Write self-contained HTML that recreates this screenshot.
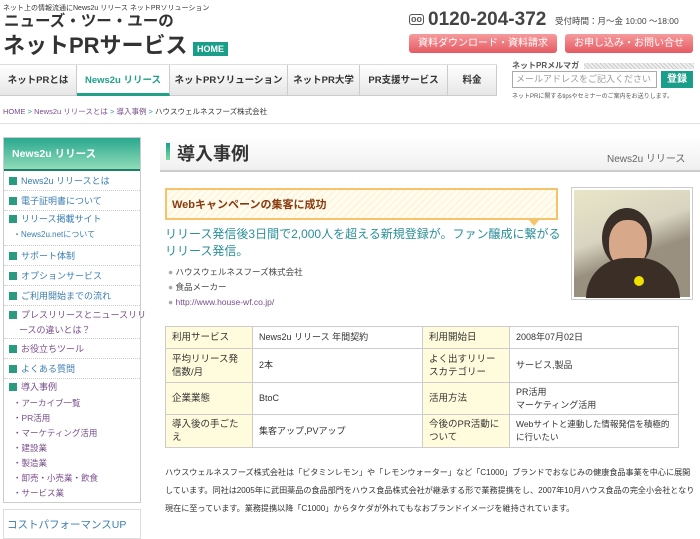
<!DOCTYPE html>
<html><head><meta charset="utf-8"><style>
*{margin:0;padding:0;box-sizing:border-box}
body{width:700px;height:536px;overflow:hidden;background:#fff;font-family:"Liberation Sans","Noto Sans CJK JP",sans-serif;color:#333;position:relative}
.a{position:absolute;white-space:nowrap}
.nav{position:absolute;top:64px;left:0;height:32px;width:497px;display:flex;border-top:1px solid #ddd;border-bottom:1px solid #ccc;background:linear-gradient(#fff,#e6e6e6)}
.nav div{height:31px;line-height:31px;font-size:9.5px;font-weight:bold;text-align:center;border-right:1px solid #ccc;color:#333;overflow:hidden;white-space:nowrap}
.side{position:absolute;left:3px;top:137px;width:138px;height:366px;border:1px solid #ccc}
.sh{height:33px;background:linear-gradient(#2aa88e,#8fdcb8);color:#fff;font-weight:bold;font-size:10.5px;line-height:33px;padding-left:8px;border-bottom:2px solid #1d7f6a}
.si{font-size:9px;color:#3a7eb0;padding:0 0 0 5px;border-bottom:1px dotted #ccc;height:20px;line-height:20px;white-space:nowrap}
.si b{display:inline-block;width:8px;height:8px;background:#2a9a80;margin-right:4px;vertical-align:-1px}
.sub{font-size:8.5px;color:#7a4d8c;padding-left:9px;line-height:15px;white-space:nowrap}
table{position:absolute;left:165px;top:326px;width:513px;border-collapse:collapse;font-size:9px;table-layout:fixed}
td{border:1px solid #ccc;padding:2px 6px;line-height:13px;vertical-align:middle}
td.h{background:#fffbdc;font-size:9.5px}
</style></head><body>
<div class="a" style="left:3px;top:3px;font-size:7px;color:#333">ネット上の情報流通にNews2u リリース ネットPRソリューション</div>
<div class="a" style="left:4px;top:13px;font-size:15.5px;font-weight:bold;color:#333;line-height:18px">ニューズ・ツー・ユーの</div>
<div class="a" style="left:3px;top:33px;font-size:22px;font-weight:bold;color:#333;line-height:26px">ネットPRサービス</div>
<div class="a" style="left:193px;top:42px;width:35px;height:14px;background:#1a9e8a;color:#fff;font-size:9px;font-weight:bold;text-align:center;line-height:14px">HOME</div>
<div class="a" style="left:409px;top:14px;font-size:9px;font-weight:bold;color:#555;border:1.5px solid #555;border-radius:3px;padding:0 1px;line-height:9px">oo</div>
<div class="a" style="left:428px;top:9px;font-size:19px;font-weight:bold;color:#444">0120-204-372</div>
<div class="a" style="left:555px;top:15px;font-size:8.5px;color:#444">受付時間：月〜金 10:00 〜18:00</div>
<div class="a" style="left:409px;top:34px;width:148px;height:19px;border-radius:3px;background:linear-gradient(#f59a9c,#e65a62);color:#fff;font-size:10px;text-align:center;line-height:19px">資料ダウンロード・資料請求</div>
<div class="a" style="left:565px;top:34px;width:128px;height:19px;border-radius:3px;background:linear-gradient(#f59a9c,#e65a62);color:#fff;font-size:10px;text-align:center;line-height:19px">お申し込み・お問い合せ</div>
<div class="nav">
<div style="width:77px">ネットPRとは</div>
<div style="width:93px;color:#21a08a;border-bottom:3px solid #21a08a;background:#fff">News2u リリース</div>
<div style="width:118px">ネットPRソリューション</div>
<div style="width:72px">ネットPR大学</div>
<div style="width:88px">PR支援サービス</div>
<div style="width:49px">料金</div>
</div>
<div class="a" style="left:512px;top:60px;font-size:8px;font-weight:bold;color:#555">ネットPRメルマガ</div>
<div class="a" style="left:584px;top:63px;width:110px;height:6px;background:repeating-linear-gradient(45deg,#ccc 0 1px,#eee 1px 3px)"></div>
<div class="a" style="left:512px;top:71px;width:145px;height:17px;border:1px solid #aaa;font-size:9px;color:#999;padding-left:3px;line-height:15px;overflow:hidden">メールアドレスをご記入ください</div>
<div class="a" style="left:661px;top:71px;width:32px;height:17px;background:#1a9e8a;color:#fff;font-size:10px;font-weight:bold;text-align:center;line-height:17px">登録</div>
<div class="a" style="left:512px;top:91px;font-size:6px;color:#555">ネットPRに関するtipsやセミナーのご案内をお送りします。</div>
<div class="a" style="left:3px;top:106px;font-size:7.5px;color:#7a4d8c">HOME <span style="color:#2a9a80">&gt;</span> News2u リリースとは <span style="color:#2a9a80">&gt;</span> 導入事例 <span style="color:#2a9a80">&gt;</span> <span style="color:#333">ハウスウェルネスフーズ株式会社</span></div>
<div class="a" style="left:0;top:123px;width:700px;border-top:1px solid #e0e0e0"></div>

<div class="side">
<div class="sh">News2u リリース</div>
<div class="si"><b></b>News2u リリースとは</div>
<div class="si"><b></b>電子証明書について</div>
<div class="si" style="border:none;height:16px;line-height:16px"><b></b>リリース掲載サイト</div>
<div class="sub" style="color:#3a7eb0;border-bottom:1px dotted #ccc;padding-bottom:3px;font-size:8px">・News2u.netについて</div>
<div class="si"><b></b>サポート体制</div>
<div class="si"><b></b>オプションサービス</div>
<div class="si"><b></b>ご利用開始までの流れ</div>
<div class="si" style="color:#7a4d8c;height:33px;line-height:15px;padding-top:2px"><b></b>プレスリリースとニュースリリ<br>&nbsp;&nbsp;&nbsp;&nbsp;ースの違いとは？</div>
<div class="si" style="color:#7a4d8c"><b></b>お役立ちツール</div>
<div class="si"><b></b>よくある質問</div>
<div class="si" style="border:none;color:#7a4d8c;height:17px;line-height:17px"><b></b>導入事例</div>
<div class="sub">・アーカイブ一覧</div>
<div class="sub">・PR活用</div>
<div class="sub">・マーケティング活用</div>
<div class="sub">・建設業</div>
<div class="sub">・製造業</div>
<div class="sub">・卸売・小売業・飲食</div>
<div class="sub">・サービス業</div>
</div>
<div class="a" style="left:3px;top:509px;width:138px;height:30px;border:1px solid #ddd;font-size:10.5px;color:#3a7eb0;padding:7px 0 0 3px">コストパフォーマンスUP</div>

<div class="a" style="left:160px;top:136px;width:540px;height:36px;background:linear-gradient(#fff,#f0f0f0);border-bottom:2px solid #ccc"></div>
<div class="a" style="left:166px;top:143px;width:4px;height:17px;background:linear-gradient(#1a9e8a,#7ed9a0)"></div>
<div class="a" style="left:177px;top:140px;font-size:18px;font-weight:bold;color:#333">導入事例</div>
<div class="a" style="left:607px;top:150px;font-size:10px;color:#666">News2u リリース</div>

<div class="a" style="left:165px;top:188px;width:393px;height:32px;border:2px solid #f5c46a;background:repeating-linear-gradient(135deg,#fffdf2 0 3px,#fdf5dc 3px 5px)"></div>
<div class="a" style="left:528px;top:219px;width:0;height:0;border-left:6px solid transparent;border-right:6px solid transparent;border-top:7px solid #f5c46a"></div>
<div class="a" style="left:172px;top:196px;font-size:11px;font-weight:bold;color:#8b3a0e">Webキャンペーンの集客に成功</div>
<div class="a" style="left:165px;top:226px;font-size:12px;color:#2a8f9a;line-height:17px">リリース発信後3日間で2,000人を超える新規登録が。ファン醸成に繋がる<br>リリース発信。</div>
<div class="a" style="left:168px;top:265px;font-size:8.5px;color:#444;line-height:15px">
<div><span style="color:#aaa">●</span> ハウスウェルネスフーズ株式会社</div>
<div><span style="color:#aaa">●</span> 食品メーカー</div>
<div style="color:#7a4d8c"><span style="color:#aaa">●</span> http://www.house-wf.co.jp/</div></div>

<div class="a" style="left:571px;top:187px;width:122px;height:113px;border:1px solid #ccc;padding:2px;background:#fff">
<div style="width:100%;height:100%;background:linear-gradient(160deg,#e8e6c8 0%,#d8d4c0 40%,#9a9080 60%)"></div>
<div style="position:absolute;left:30px;top:20px;width:50px;height:60px;border-radius:50%;background:#3a2e28"></div>
<div style="position:absolute;left:37px;top:32px;width:38px;height:48px;border-radius:45%;background:#d8a88a"></div>
<div style="position:absolute;left:14px;top:70px;width:94px;height:40px;border-radius:40px 40px 0 0;background:#3a2e26"></div>
<div style="position:absolute;left:62px;top:88px;width:10px;height:10px;border-radius:50%;background:#f0e000"></div>
</div>

<table>
<colgroup><col style="width:87px"><col style="width:170px"><col style="width:87px"><col style="width:169px"></colgroup>
<tr style="height:22px"><td class="h">利用サービス</td><td>News2u リリース 年間契約</td><td class="h">利用開始日</td><td>2008年07月02日</td></tr>
<tr style="height:34px"><td class="h">平均リリース発信数/月</td><td>2本</td><td class="h">よく出すリリースカテゴリー</td><td>サービス,製品</td></tr>
<tr style="height:32px"><td class="h">企業業態</td><td>BtoC</td><td class="h">活用方法</td><td>PR活用<br>マーケティング活用</td></tr>
<tr style="height:33px"><td class="h">導入後の手ごたえ</td><td>集客アップ,PVアップ</td><td class="h">今後のPR活動について</td><td style="font-size:8.5px">Webサイトと連動した情報発信を積極的に行いたい</td></tr>
</table>

<div class="a" style="left:165px;top:464px;width:530px;white-space:normal;font-size:8.1px;line-height:18px;color:#333">ハウスウェルネスフーズ株式会社は「ビタミンレモン」や「レモンウォーター」など「C1000」ブランドでおなじみの健康食品事業を中心に展開しています。同社は2005年に武田薬品の食品部門をハウス食品株式会社が継承する形で業務提携をし、2007年10月ハウス食品の完全小会社となり現在に至っています。業務提携以降「C1000」からタケダが外れてもなおブランドイメージを維持されています。</div>
</body></html>
